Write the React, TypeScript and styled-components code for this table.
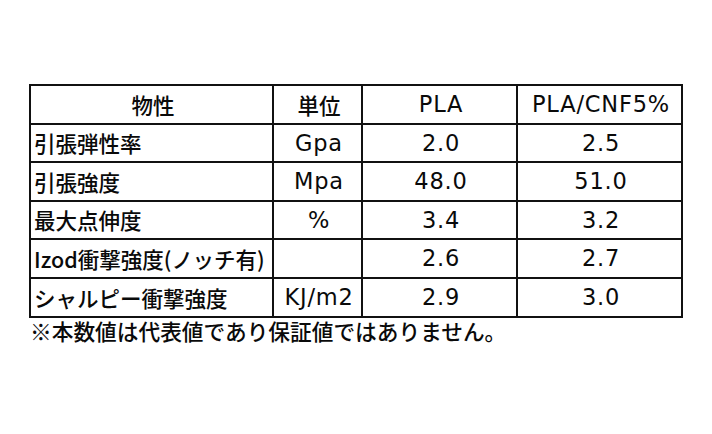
import React from "react";
import styled, { createGlobalStyle } from "styled-components";

const Global = createGlobalStyle`
  html, body { margin: 0; padding: 0; background: #fff; }
  body { font-family: "Noto Sans CJK JP", "Noto Sans", sans-serif; color: #0a0a0a; }
`;

const Page = styled.div`
  width: 712px;
  height: 434px;
  box-sizing: border-box;
  padding: 84px 0 0 29px;
`;

const Table = styled.table`
  border-collapse: collapse;
  table-layout: fixed;
  width: 654px;
  border: 2px solid #111;
`;

const Row = styled.tr`
  height: 38.6px;
`;

const Cell = styled.td<{ $align?: "left" | "center"; $latin?: boolean }>`
  border: 2px solid #111;
  padding: 0 0 0 3px;
  text-align: ${(p) => p.$align ?? "center"};
  vertical-align: middle;
  font-size: ${(p) => (p.$latin ? "22.5px" : "21.5px")};
  font-weight: ${(p) => (p.$latin ? 400 : 500)};
  line-height: 1;
  white-space: nowrap;
  overflow: hidden;
  font-family: ${(p) =>
    p.$latin
      ? `"DejaVu Sans", "Noto Sans CJK JP", sans-serif`
      : `"Noto Sans CJK JP", sans-serif`};
  letter-spacing: ${(p) => (p.$latin ? "0.8px" : "0")};
`;

const Note = styled.p`
  margin: 0 0 0 1px;
  font-size: 21.7px;
  font-weight: 500;
  line-height: 26px;
  font-family: "Noto Sans CJK JP", sans-serif;
  white-space: nowrap;
`;

type RowData = { name: string; unit: string; pla: string; cnf: string };

const rows: RowData[] = [
  { name: "引張弾性率", unit: "Gpa", pla: "2.0", cnf: "2.5" },
  { name: "引張強度", unit: "Mpa", pla: "48.0", cnf: "51.0" },
  { name: "最大点伸度", unit: "%", pla: "3.4", cnf: "3.2" },
  { name: "Izod衝撃強度(ノッチ有)", unit: "", pla: "2.6", cnf: "2.7" },
  { name: "シャルピー衝撃強度", unit: "KJ/m2", pla: "2.9", cnf: "3.0" },
];

export default function App() {
  return (
    <>
      <Global />
      <Page>
        <Table>
          <colgroup>
            <col style={{ width: 243 }} />
            <col style={{ width: 89 }} />
            <col style={{ width: 155 }} />
            <col style={{ width: 165 }} />
          </colgroup>
          <tbody>
            <Row>
              <Cell>物性</Cell>
              <Cell>単位</Cell>
              <Cell $latin>PLA</Cell>
              <Cell $latin>PLA/CNF5%</Cell>
            </Row>
            {rows.map((r) => (
              <Row key={r.name}>
                <Cell $align="left">{r.name}</Cell>
                <Cell $latin>{r.unit}</Cell>
                <Cell $latin>{r.pla}</Cell>
                <Cell $latin>{r.cnf}</Cell>
              </Row>
            ))}
          </tbody>
        </Table>
        <Note>※本数値は代表値であり保証値ではありません。</Note>
      </Page>
    </>
  );
}
